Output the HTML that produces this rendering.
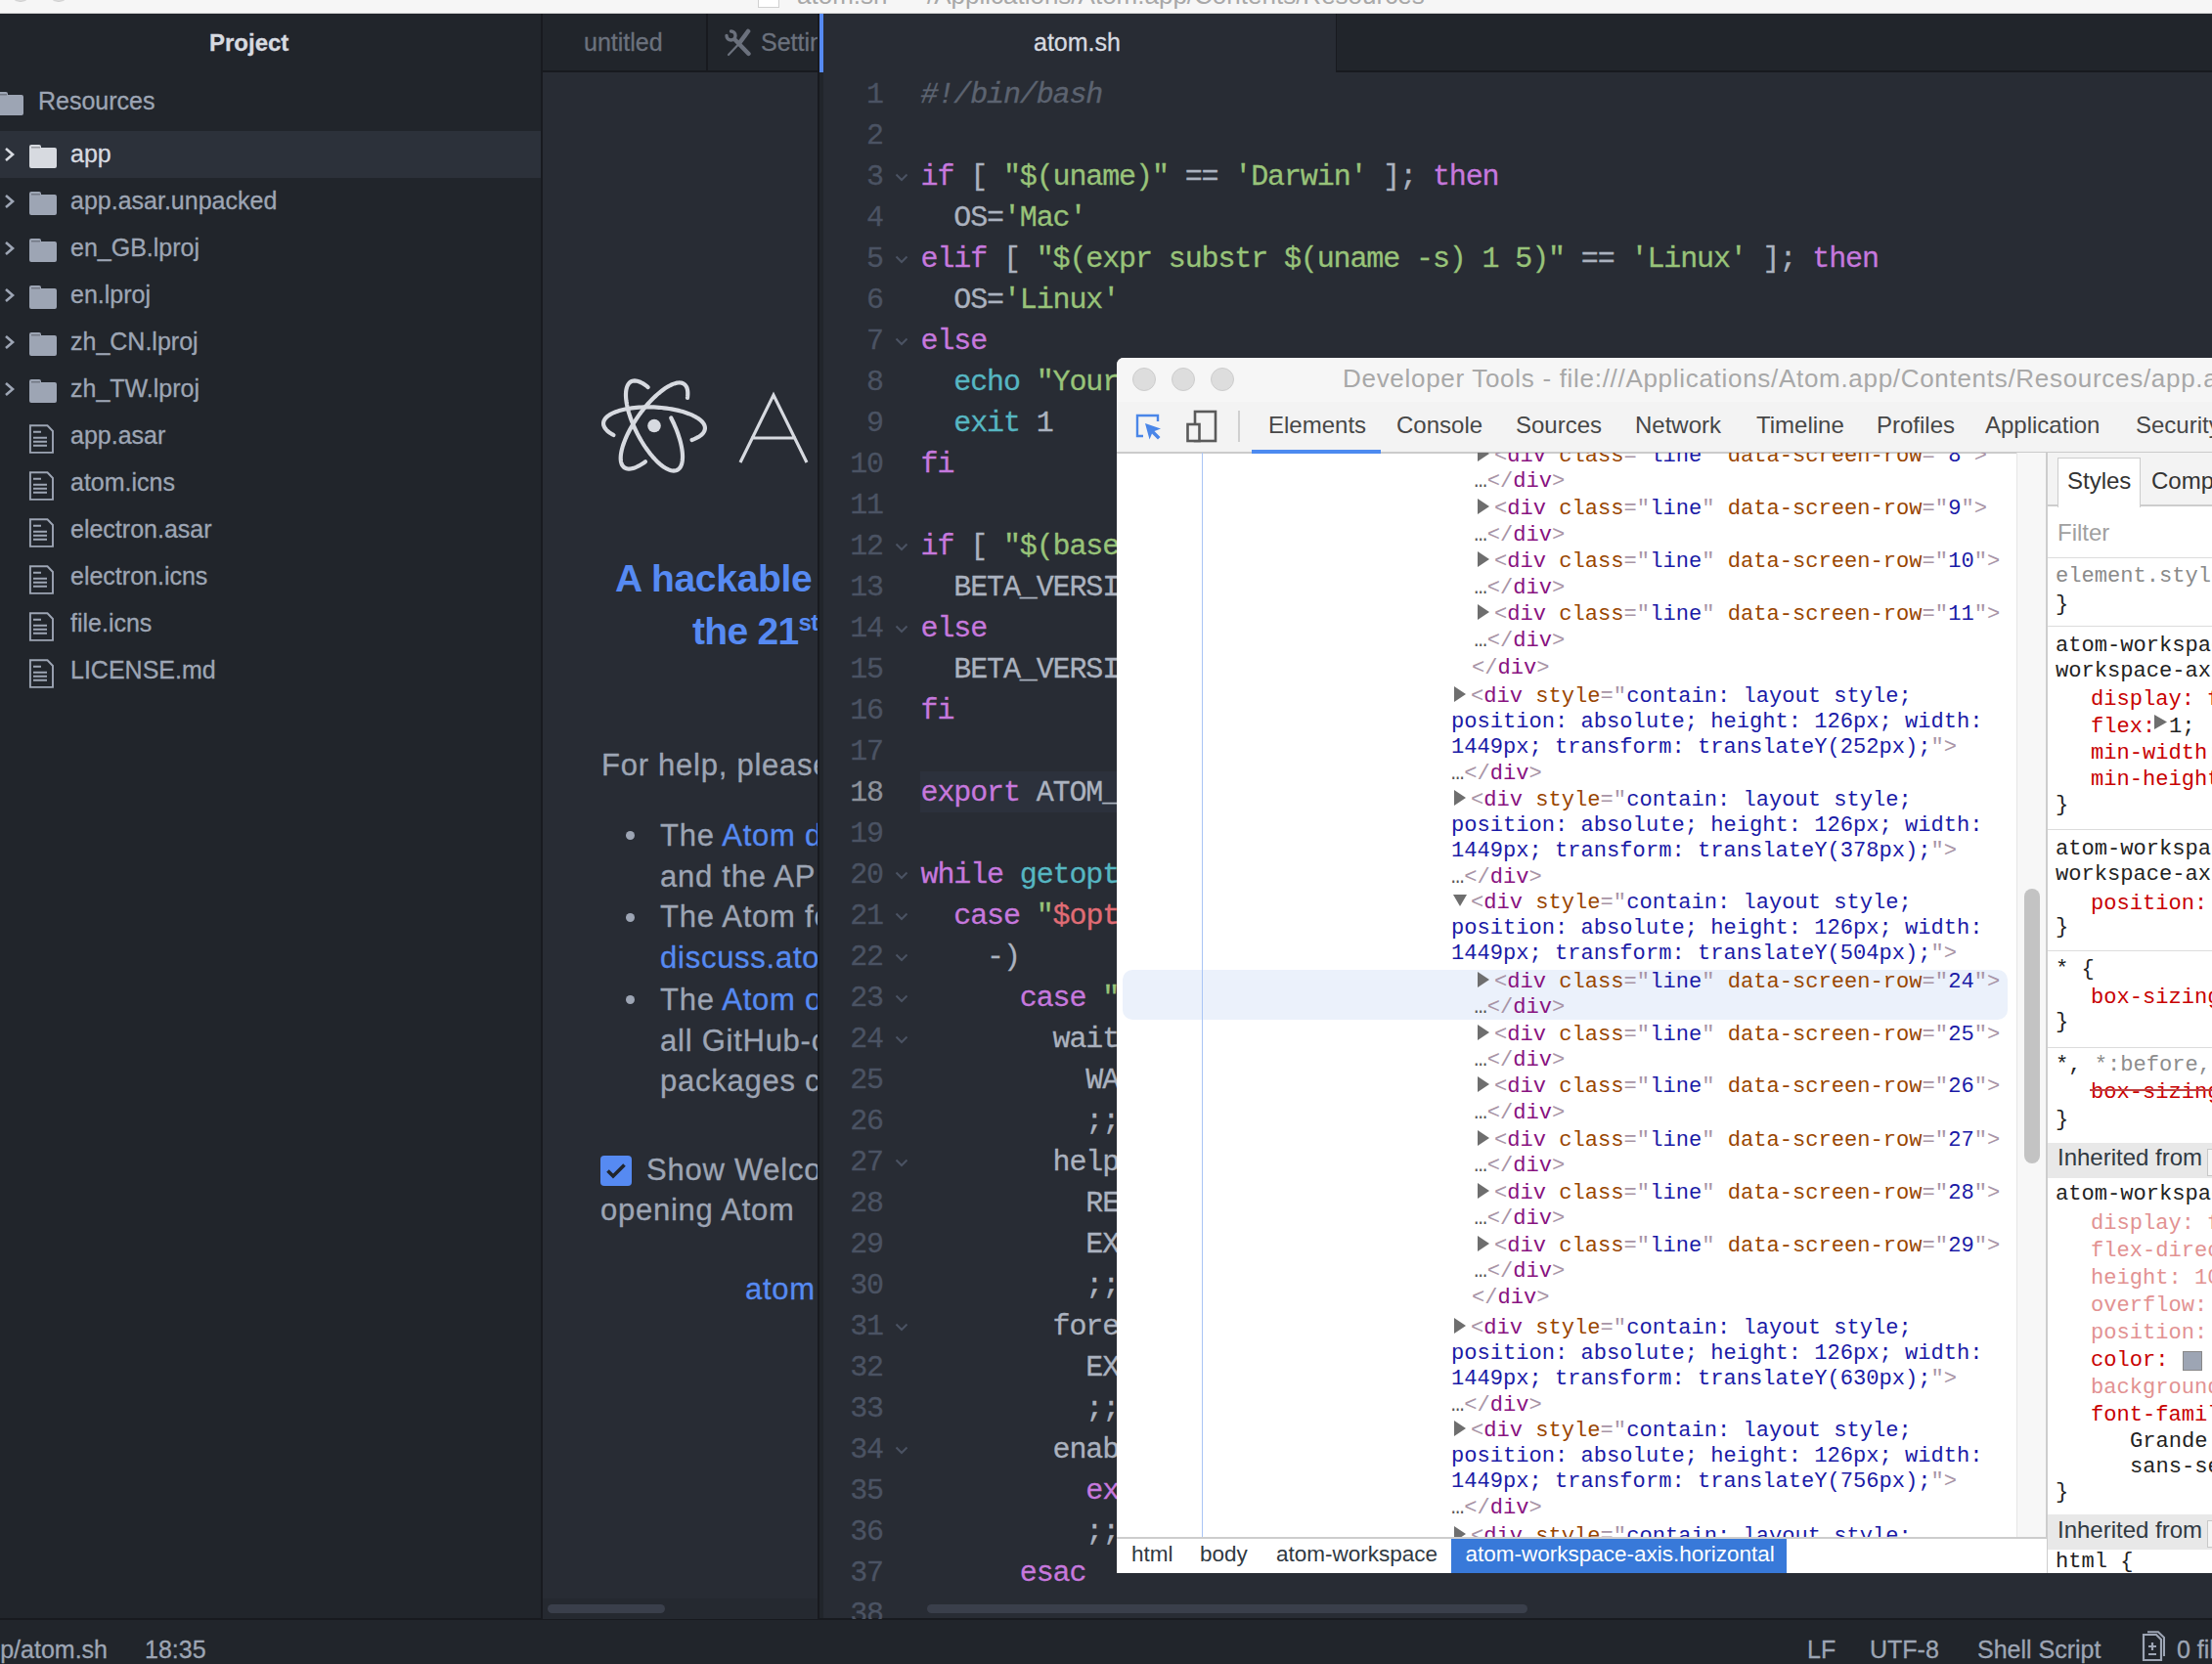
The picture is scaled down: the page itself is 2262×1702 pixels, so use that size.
<!DOCTYPE html>
<html><head><meta charset="utf-8"><style>
html,body{margin:0;padding:0;}
body{width:2262px;height:1702px;overflow:hidden;position:relative;background:#21252b;font-family:"Liberation Sans", sans-serif;}
.t{position:absolute;white-space:pre;}
.d{-webkit-text-stroke:0.3px currentColor;}
.b{position:absolute;}
</style></head><body>
<div class="b" style="left:0px;top:0px;width:2262px;height:14px;background:#f6f6f6;"></div>
<div class="b" style="left:0px;top:13px;width:2262px;height:1px;background:#d6d6d6;"></div>
<div class="b" style="left:9px;top:-22px;width:22px;height:22px;border-radius:50%;background:#dcdcdc;border:1px solid #cfcfcf"></div>
<div class="b" style="left:48px;top:-22px;width:22px;height:22px;border-radius:50%;background:#dcdcdc;border:1px solid #cfcfcf"></div>
<div class="b" style="left:775px;top:-14px;width:20px;height:20px;background:#ffffff;border:1px solid #d0d0d0;"></div>
<div class="t" style="left:815.00px;top:-20.01px;font-size:26px;line-height:31px;color:#a8a8a8;">atom.sh — /Applications/Atom.app/Contents/Resources</div>
<div class="b" style="left:0px;top:14px;width:2262px;height:60px;background:#21252b;"></div>
<div class="t d" style="left:214.00px;top:28.68px;font-size:24px;line-height:29px;color:#d7dae0;font-weight:bold;">Project</div>
<div class="b" style="left:0px;top:74px;width:553px;height:1582px;background:#21252b;"></div>
<div class="b" style="left:553px;top:14px;width:2px;height:1642px;background:#181a1f;"></div>
<div class="b" style="left:555px;top:14px;width:283px;height:60px;background:#21252b;"></div>
<div class="b" style="left:555px;top:72px;width:283px;height:2px;background:#181a1f;"></div>
<div class="b" style="left:722px;top:14px;width:2px;height:58px;background:#181a1f;"></div>
<div class="t d" style="left:597.00px;top:27.83px;font-size:25px;line-height:30px;color:#6b717d;">untitled</div>
<div class="t d" style="left:778.00px;top:27.83px;font-size:25px;line-height:30px;color:#6b717d;">Settings</div>
<svg class="b" style="left:740px;top:28px" width="32" height="32" viewBox="0 0 32 32">
<g fill="none" stroke="#6b717d" stroke-linecap="round">
<path d="M3 8.5 A4.5 4.5 0 1 0 7.5 4" stroke-width="3.4"/>
<path d="M12 13 L25.5 27" stroke-width="4.4"/>
<path d="M25 4 L16.5 15.5" stroke-width="4.6"/>
<path d="M15 17.5 L5 28" stroke-width="2.2"/>
</g></svg>
<div class="b" style="left:555px;top:74px;width:281px;height:1582px;background:#282c34;"></div>
<div class="b" style="left:836px;top:14px;width:2px;height:1642px;background:#181a1f;"></div>
<div class="b" style="left:838px;top:14px;width:4px;height:60px;background:#568af2;"></div>
<div class="b" style="left:842px;top:14px;width:525px;height:60px;background:#282c34;"></div>
<div class="b" style="left:1366px;top:14px;width:896px;height:60px;background:#21252b;"></div>
<div class="b" style="left:1366px;top:72px;width:896px;height:2px;background:#181a1f;"></div>
<div class="b" style="left:1366px;top:14px;width:1px;height:60px;background:#181a1f;"></div>
<div class="t d" style="left:1057.00px;top:27.83px;font-size:25px;line-height:30px;color:#d7dae0;">atom.sh</div>
<div class="b" style="left:842px;top:74px;width:1420px;height:1582px;background:#282c34;"></div>
<div class="b" style="left:0px;top:1656px;width:2262px;height:46px;background:#21252b;"></div>
<div class="b" style="left:0px;top:1655px;width:2262px;height:2px;background:#181a1f;"></div>
<div class="t d" style="left:-27.60px;top:1672.13px;font-size:25px;line-height:30px;color:#9da5b4;">app/atom.sh</div>
<div class="t d" style="left:148.00px;top:1672.13px;font-size:25px;line-height:30px;color:#9da5b4;">18:35</div>
<div class="t d" style="left:1848.00px;top:1672.13px;font-size:25px;line-height:30px;color:#9da5b4;">LF</div>
<div class="t d" style="left:1912.00px;top:1672.13px;font-size:25px;line-height:30px;color:#9da5b4;">UTF-8</div>
<div class="t d" style="left:2022.00px;top:1672.13px;font-size:25px;line-height:30px;color:#9da5b4;">Shell Script</div>
<div class="t d" style="left:2226.00px;top:1672.13px;font-size:25px;line-height:30px;color:#9da5b4;">0 files</div>
<svg class="b" style="left:2186px;top:1668px" width="30" height="32" viewBox="0 0 30 32"><path d="M6 4 H19 L24 9 V30 H6 Z" fill="none" stroke="#9da5b4" stroke-width="2.2"/><path d="M10 1.2 H21 L27 7 V26" fill="none" stroke="#9da5b4" stroke-width="2"/><path d="M15 12 V20 M11 16 H19 M11 24 H19" stroke="#9da5b4" stroke-width="2.2"/></svg>
<svg class="b" style="left:-4px;top:94px" width="28" height="24" viewBox="0 0 28 24"><path d="M0 2 Q0 0 2 0 L10 0 Q12 0 12 2 L12 3 L26 3 Q28 3 28 5 L28 22 Q28 24 26 24 L2 24 Q0 24 0 22 Z" fill="#9da5b4"/><rect x="2" y="2" width="9" height="1.5" fill="#21252b" opacity="0.35"/></svg>
<div class="t d" style="left:39.00px;top:88.33px;font-size:25px;line-height:30px;color:#9da5b4;">Resources</div>
<div class="b" style="left:0px;top:134px;width:553px;height:48px;background:#2c313a;"></div>
<svg class="b" style="left:4px;top:150px" width="12" height="16" viewBox="0 0 12 16"><path d="M2 2 L9 8 L2 14" fill="none" stroke="#d7dae0" stroke-width="2.6"/></svg>
<svg class="b" style="left:30px;top:148px" width="28" height="24" viewBox="0 0 28 24"><path d="M0 2 Q0 0 2 0 L10 0 Q12 0 12 2 L12 3 L26 3 Q28 3 28 5 L28 22 Q28 24 26 24 L2 24 Q0 24 0 22 Z" fill="#d7dae0"/><rect x="2" y="2" width="9" height="1.5" fill="#21252b" opacity="0.35"/></svg>
<div class="t d" style="left:72.00px;top:142.33px;font-size:25px;line-height:30px;color:#d7dae0;">app</div>
<svg class="b" style="left:4px;top:198px" width="12" height="16" viewBox="0 0 12 16"><path d="M2 2 L9 8 L2 14" fill="none" stroke="#9da5b4" stroke-width="2.6"/></svg>
<svg class="b" style="left:30px;top:196px" width="28" height="24" viewBox="0 0 28 24"><path d="M0 2 Q0 0 2 0 L10 0 Q12 0 12 2 L12 3 L26 3 Q28 3 28 5 L28 22 Q28 24 26 24 L2 24 Q0 24 0 22 Z" fill="#9da5b4"/><rect x="2" y="2" width="9" height="1.5" fill="#21252b" opacity="0.35"/></svg>
<div class="t d" style="left:72.00px;top:190.33px;font-size:25px;line-height:30px;color:#9da5b4;">app.asar.unpacked</div>
<svg class="b" style="left:4px;top:246px" width="12" height="16" viewBox="0 0 12 16"><path d="M2 2 L9 8 L2 14" fill="none" stroke="#9da5b4" stroke-width="2.6"/></svg>
<svg class="b" style="left:30px;top:244px" width="28" height="24" viewBox="0 0 28 24"><path d="M0 2 Q0 0 2 0 L10 0 Q12 0 12 2 L12 3 L26 3 Q28 3 28 5 L28 22 Q28 24 26 24 L2 24 Q0 24 0 22 Z" fill="#9da5b4"/><rect x="2" y="2" width="9" height="1.5" fill="#21252b" opacity="0.35"/></svg>
<div class="t d" style="left:72.00px;top:238.33px;font-size:25px;line-height:30px;color:#9da5b4;">en_GB.lproj</div>
<svg class="b" style="left:4px;top:294px" width="12" height="16" viewBox="0 0 12 16"><path d="M2 2 L9 8 L2 14" fill="none" stroke="#9da5b4" stroke-width="2.6"/></svg>
<svg class="b" style="left:30px;top:292px" width="28" height="24" viewBox="0 0 28 24"><path d="M0 2 Q0 0 2 0 L10 0 Q12 0 12 2 L12 3 L26 3 Q28 3 28 5 L28 22 Q28 24 26 24 L2 24 Q0 24 0 22 Z" fill="#9da5b4"/><rect x="2" y="2" width="9" height="1.5" fill="#21252b" opacity="0.35"/></svg>
<div class="t d" style="left:72.00px;top:286.33px;font-size:25px;line-height:30px;color:#9da5b4;">en.lproj</div>
<svg class="b" style="left:4px;top:342px" width="12" height="16" viewBox="0 0 12 16"><path d="M2 2 L9 8 L2 14" fill="none" stroke="#9da5b4" stroke-width="2.6"/></svg>
<svg class="b" style="left:30px;top:340px" width="28" height="24" viewBox="0 0 28 24"><path d="M0 2 Q0 0 2 0 L10 0 Q12 0 12 2 L12 3 L26 3 Q28 3 28 5 L28 22 Q28 24 26 24 L2 24 Q0 24 0 22 Z" fill="#9da5b4"/><rect x="2" y="2" width="9" height="1.5" fill="#21252b" opacity="0.35"/></svg>
<div class="t d" style="left:72.00px;top:334.33px;font-size:25px;line-height:30px;color:#9da5b4;">zh_CN.lproj</div>
<svg class="b" style="left:4px;top:390px" width="12" height="16" viewBox="0 0 12 16"><path d="M2 2 L9 8 L2 14" fill="none" stroke="#9da5b4" stroke-width="2.6"/></svg>
<svg class="b" style="left:30px;top:388px" width="28" height="24" viewBox="0 0 28 24"><path d="M0 2 Q0 0 2 0 L10 0 Q12 0 12 2 L12 3 L26 3 Q28 3 28 5 L28 22 Q28 24 26 24 L2 24 Q0 24 0 22 Z" fill="#9da5b4"/><rect x="2" y="2" width="9" height="1.5" fill="#21252b" opacity="0.35"/></svg>
<div class="t d" style="left:72.00px;top:382.33px;font-size:25px;line-height:30px;color:#9da5b4;">zh_TW.lproj</div>
<svg class="b" style="left:29px;top:433.5px" width="26" height="30" viewBox="0 0 26 30"><path d="M1.9 1.3 L19.5 1.3 L25 7 L25 28.9 L1.9 28.9 Z" fill="none" stroke="#9da5b4" stroke-width="1.9"/><path d="M5 7.8 H13 M5 13.8 H19 M5 17.8 H19 M5 21.8 H19" stroke="#9da5b4" stroke-width="1.9"/></svg>
<div class="t d" style="left:72.00px;top:430.33px;font-size:25px;line-height:30px;color:#9da5b4;">app.asar</div>
<svg class="b" style="left:29px;top:481.5px" width="26" height="30" viewBox="0 0 26 30"><path d="M1.9 1.3 L19.5 1.3 L25 7 L25 28.9 L1.9 28.9 Z" fill="none" stroke="#9da5b4" stroke-width="1.9"/><path d="M5 7.8 H13 M5 13.8 H19 M5 17.8 H19 M5 21.8 H19" stroke="#9da5b4" stroke-width="1.9"/></svg>
<div class="t d" style="left:72.00px;top:478.33px;font-size:25px;line-height:30px;color:#9da5b4;">atom.icns</div>
<svg class="b" style="left:29px;top:529.5px" width="26" height="30" viewBox="0 0 26 30"><path d="M1.9 1.3 L19.5 1.3 L25 7 L25 28.9 L1.9 28.9 Z" fill="none" stroke="#9da5b4" stroke-width="1.9"/><path d="M5 7.8 H13 M5 13.8 H19 M5 17.8 H19 M5 21.8 H19" stroke="#9da5b4" stroke-width="1.9"/></svg>
<div class="t d" style="left:72.00px;top:526.33px;font-size:25px;line-height:30px;color:#9da5b4;">electron.asar</div>
<svg class="b" style="left:29px;top:577.5px" width="26" height="30" viewBox="0 0 26 30"><path d="M1.9 1.3 L19.5 1.3 L25 7 L25 28.9 L1.9 28.9 Z" fill="none" stroke="#9da5b4" stroke-width="1.9"/><path d="M5 7.8 H13 M5 13.8 H19 M5 17.8 H19 M5 21.8 H19" stroke="#9da5b4" stroke-width="1.9"/></svg>
<div class="t d" style="left:72.00px;top:574.33px;font-size:25px;line-height:30px;color:#9da5b4;">electron.icns</div>
<svg class="b" style="left:29px;top:625.5px" width="26" height="30" viewBox="0 0 26 30"><path d="M1.9 1.3 L19.5 1.3 L25 7 L25 28.9 L1.9 28.9 Z" fill="none" stroke="#9da5b4" stroke-width="1.9"/><path d="M5 7.8 H13 M5 13.8 H19 M5 17.8 H19 M5 21.8 H19" stroke="#9da5b4" stroke-width="1.9"/></svg>
<div class="t d" style="left:72.00px;top:622.33px;font-size:25px;line-height:30px;color:#9da5b4;">file.icns</div>
<svg class="b" style="left:29px;top:673.5px" width="26" height="30" viewBox="0 0 26 30"><path d="M1.9 1.3 L19.5 1.3 L25 7 L25 28.9 L1.9 28.9 Z" fill="none" stroke="#9da5b4" stroke-width="1.9"/><path d="M5 7.8 H13 M5 13.8 H19 M5 17.8 H19 M5 21.8 H19" stroke="#9da5b4" stroke-width="1.9"/></svg>
<div class="t d" style="left:72.00px;top:670.33px;font-size:25px;line-height:30px;color:#9da5b4;">LICENSE.md</div>
<div class="b" style="left:941px;top:788.5px;width:1321px;height:42px;background:#2c313c;"></div>
<div class="b" style="left:842px;top:74px;width:1420px;height:1582px;overflow:hidden">
<div class="t d" style="left:0.00px;top:2.22px;font-size:30px;line-height:42px;color:#4b5363;font-family:'Liberation Mono', monospace;width:60.5px;text-align:right;letter-spacing:-1.4px;">1</div>
<div class="t d" style="left:99.50px;top:2.22px;font-size:30px;line-height:42px;color:#abb2bf;font-family:'Liberation Mono', monospace;letter-spacing:-1.12px;"><span style="color:#5c6370;font-style:italic">#!/bin/bash</span></div>
<div class="t d" style="left:0.00px;top:44.22px;font-size:30px;line-height:42px;color:#4b5363;font-family:'Liberation Mono', monospace;width:60.5px;text-align:right;letter-spacing:-1.4px;">2</div>
<div class="t d" style="left:99.50px;top:44.22px;font-size:30px;line-height:42px;color:#abb2bf;font-family:'Liberation Mono', monospace;letter-spacing:-1.12px;"></div>
<div class="t d" style="left:0.00px;top:86.22px;font-size:30px;line-height:42px;color:#4b5363;font-family:'Liberation Mono', monospace;width:60.5px;text-align:right;letter-spacing:-1.4px;">3</div>
<svg class="b" style="left:73px;top:102.69999999999999px" width="14" height="9" viewBox="0 0 14 9"><path d="M1.5 1.5 L7 7 L12.5 1.5" fill="none" stroke="#4b5363" stroke-width="2"/></svg>
<div class="t d" style="left:99.50px;top:86.22px;font-size:30px;line-height:42px;color:#abb2bf;font-family:'Liberation Mono', monospace;letter-spacing:-1.12px;"><span style="color:#c678dd">if</span> [ <span style="color:#98c379">&quot;$(uname)&quot;</span> == <span style="color:#98c379">&#x27;Darwin&#x27;</span> ]; <span style="color:#c678dd">then</span></div>
<div class="t d" style="left:0.00px;top:128.22px;font-size:30px;line-height:42px;color:#4b5363;font-family:'Liberation Mono', monospace;width:60.5px;text-align:right;letter-spacing:-1.4px;">4</div>
<div class="t d" style="left:99.50px;top:128.22px;font-size:30px;line-height:42px;color:#abb2bf;font-family:'Liberation Mono', monospace;letter-spacing:-1.12px;">  OS=<span style="color:#98c379">&#x27;Mac&#x27;</span></div>
<div class="t d" style="left:0.00px;top:170.22px;font-size:30px;line-height:42px;color:#4b5363;font-family:'Liberation Mono', monospace;width:60.5px;text-align:right;letter-spacing:-1.4px;">5</div>
<svg class="b" style="left:73px;top:186.7px" width="14" height="9" viewBox="0 0 14 9"><path d="M1.5 1.5 L7 7 L12.5 1.5" fill="none" stroke="#4b5363" stroke-width="2"/></svg>
<div class="t d" style="left:99.50px;top:170.22px;font-size:30px;line-height:42px;color:#abb2bf;font-family:'Liberation Mono', monospace;letter-spacing:-1.12px;"><span style="color:#c678dd">elif</span> [ <span style="color:#98c379">&quot;$(expr substr $(uname -s) 1 5)&quot;</span> == <span style="color:#98c379">&#x27;Linux&#x27;</span> ]; <span style="color:#c678dd">then</span></div>
<div class="t d" style="left:0.00px;top:212.22px;font-size:30px;line-height:42px;color:#4b5363;font-family:'Liberation Mono', monospace;width:60.5px;text-align:right;letter-spacing:-1.4px;">6</div>
<div class="t d" style="left:99.50px;top:212.22px;font-size:30px;line-height:42px;color:#abb2bf;font-family:'Liberation Mono', monospace;letter-spacing:-1.12px;">  OS=<span style="color:#98c379">&#x27;Linux&#x27;</span></div>
<div class="t d" style="left:0.00px;top:254.22px;font-size:30px;line-height:42px;color:#4b5363;font-family:'Liberation Mono', monospace;width:60.5px;text-align:right;letter-spacing:-1.4px;">7</div>
<svg class="b" style="left:73px;top:270.7px" width="14" height="9" viewBox="0 0 14 9"><path d="M1.5 1.5 L7 7 L12.5 1.5" fill="none" stroke="#4b5363" stroke-width="2"/></svg>
<div class="t d" style="left:99.50px;top:254.22px;font-size:30px;line-height:42px;color:#abb2bf;font-family:'Liberation Mono', monospace;letter-spacing:-1.12px;"><span style="color:#c678dd">else</span></div>
<div class="t d" style="left:0.00px;top:296.22px;font-size:30px;line-height:42px;color:#4b5363;font-family:'Liberation Mono', monospace;width:60.5px;text-align:right;letter-spacing:-1.4px;">8</div>
<div class="t d" style="left:99.50px;top:296.22px;font-size:30px;line-height:42px;color:#abb2bf;font-family:'Liberation Mono', monospace;letter-spacing:-1.12px;">  <span style="color:#56b6c2">echo</span> <span style="color:#98c379">&quot;Your platform ($(uname -a)) is not supported.&quot;</span></div>
<div class="t d" style="left:0.00px;top:338.22px;font-size:30px;line-height:42px;color:#4b5363;font-family:'Liberation Mono', monospace;width:60.5px;text-align:right;letter-spacing:-1.4px;">9</div>
<div class="t d" style="left:99.50px;top:338.22px;font-size:30px;line-height:42px;color:#abb2bf;font-family:'Liberation Mono', monospace;letter-spacing:-1.12px;">  <span style="color:#56b6c2">exit</span> 1</div>
<div class="t d" style="left:0.00px;top:380.22px;font-size:30px;line-height:42px;color:#4b5363;font-family:'Liberation Mono', monospace;width:60.5px;text-align:right;letter-spacing:-1.4px;">10</div>
<div class="t d" style="left:99.50px;top:380.22px;font-size:30px;line-height:42px;color:#abb2bf;font-family:'Liberation Mono', monospace;letter-spacing:-1.12px;"><span style="color:#c678dd">fi</span></div>
<div class="t d" style="left:0.00px;top:422.22px;font-size:30px;line-height:42px;color:#4b5363;font-family:'Liberation Mono', monospace;width:60.5px;text-align:right;letter-spacing:-1.4px;">11</div>
<div class="t d" style="left:99.50px;top:422.22px;font-size:30px;line-height:42px;color:#abb2bf;font-family:'Liberation Mono', monospace;letter-spacing:-1.12px;"></div>
<div class="t d" style="left:0.00px;top:464.22px;font-size:30px;line-height:42px;color:#4b5363;font-family:'Liberation Mono', monospace;width:60.5px;text-align:right;letter-spacing:-1.4px;">12</div>
<svg class="b" style="left:73px;top:480.70000000000005px" width="14" height="9" viewBox="0 0 14 9"><path d="M1.5 1.5 L7 7 L12.5 1.5" fill="none" stroke="#4b5363" stroke-width="2"/></svg>
<div class="t d" style="left:99.50px;top:464.22px;font-size:30px;line-height:42px;color:#abb2bf;font-family:'Liberation Mono', monospace;letter-spacing:-1.12px;"><span style="color:#c678dd">if</span> [ <span style="color:#98c379">&quot;$(basename $0)&quot;</span> == <span style="color:#98c379">&#x27;atom-beta&#x27;</span> ]; <span style="color:#c678dd">then</span></div>
<div class="t d" style="left:0.00px;top:506.22px;font-size:30px;line-height:42px;color:#4b5363;font-family:'Liberation Mono', monospace;width:60.5px;text-align:right;letter-spacing:-1.4px;">13</div>
<div class="t d" style="left:99.50px;top:506.22px;font-size:30px;line-height:42px;color:#abb2bf;font-family:'Liberation Mono', monospace;letter-spacing:-1.12px;">  BETA_VERSION=true</div>
<div class="t d" style="left:0.00px;top:548.22px;font-size:30px;line-height:42px;color:#4b5363;font-family:'Liberation Mono', monospace;width:60.5px;text-align:right;letter-spacing:-1.4px;">14</div>
<svg class="b" style="left:73px;top:564.7px" width="14" height="9" viewBox="0 0 14 9"><path d="M1.5 1.5 L7 7 L12.5 1.5" fill="none" stroke="#4b5363" stroke-width="2"/></svg>
<div class="t d" style="left:99.50px;top:548.22px;font-size:30px;line-height:42px;color:#abb2bf;font-family:'Liberation Mono', monospace;letter-spacing:-1.12px;"><span style="color:#c678dd">else</span></div>
<div class="t d" style="left:0.00px;top:590.22px;font-size:30px;line-height:42px;color:#4b5363;font-family:'Liberation Mono', monospace;width:60.5px;text-align:right;letter-spacing:-1.4px;">15</div>
<div class="t d" style="left:99.50px;top:590.22px;font-size:30px;line-height:42px;color:#abb2bf;font-family:'Liberation Mono', monospace;letter-spacing:-1.12px;">  BETA_VERSION=</div>
<div class="t d" style="left:0.00px;top:632.22px;font-size:30px;line-height:42px;color:#4b5363;font-family:'Liberation Mono', monospace;width:60.5px;text-align:right;letter-spacing:-1.4px;">16</div>
<div class="t d" style="left:99.50px;top:632.22px;font-size:30px;line-height:42px;color:#abb2bf;font-family:'Liberation Mono', monospace;letter-spacing:-1.12px;"><span style="color:#c678dd">fi</span></div>
<div class="t d" style="left:0.00px;top:674.22px;font-size:30px;line-height:42px;color:#4b5363;font-family:'Liberation Mono', monospace;width:60.5px;text-align:right;letter-spacing:-1.4px;">17</div>
<div class="t d" style="left:99.50px;top:674.22px;font-size:30px;line-height:42px;color:#abb2bf;font-family:'Liberation Mono', monospace;letter-spacing:-1.12px;"></div>
<div class="t d" style="left:0.00px;top:716.22px;font-size:30px;line-height:42px;color:#8d929b;font-family:'Liberation Mono', monospace;width:60.5px;text-align:right;letter-spacing:-1.4px;">18</div>
<div class="t d" style="left:99.50px;top:716.22px;font-size:30px;line-height:42px;color:#abb2bf;font-family:'Liberation Mono', monospace;letter-spacing:-1.12px;"><span style="color:#c678dd">export</span> ATOM_DISABLE_SHELLING_OUT_FOR_ENVIRONMENT=true</div>
<div class="t d" style="left:0.00px;top:758.22px;font-size:30px;line-height:42px;color:#4b5363;font-family:'Liberation Mono', monospace;width:60.5px;text-align:right;letter-spacing:-1.4px;">19</div>
<div class="t d" style="left:99.50px;top:758.22px;font-size:30px;line-height:42px;color:#abb2bf;font-family:'Liberation Mono', monospace;letter-spacing:-1.12px;"></div>
<div class="t d" style="left:0.00px;top:800.22px;font-size:30px;line-height:42px;color:#4b5363;font-family:'Liberation Mono', monospace;width:60.5px;text-align:right;letter-spacing:-1.4px;">20</div>
<svg class="b" style="left:73px;top:816.7px" width="14" height="9" viewBox="0 0 14 9"><path d="M1.5 1.5 L7 7 L12.5 1.5" fill="none" stroke="#4b5363" stroke-width="2"/></svg>
<div class="t d" style="left:99.50px;top:800.22px;font-size:30px;line-height:42px;color:#abb2bf;font-family:'Liberation Mono', monospace;letter-spacing:-1.12px;"><span style="color:#c678dd">while</span> <span style="color:#56b6c2">getopts</span> <span style="color:#98c379">&quot;:wtfvh-:&quot;</span> opt; <span style="color:#c678dd">do</span></div>
<div class="t d" style="left:0.00px;top:842.22px;font-size:30px;line-height:42px;color:#4b5363;font-family:'Liberation Mono', monospace;width:60.5px;text-align:right;letter-spacing:-1.4px;">21</div>
<svg class="b" style="left:73px;top:858.7px" width="14" height="9" viewBox="0 0 14 9"><path d="M1.5 1.5 L7 7 L12.5 1.5" fill="none" stroke="#4b5363" stroke-width="2"/></svg>
<div class="t d" style="left:99.50px;top:842.22px;font-size:30px;line-height:42px;color:#abb2bf;font-family:'Liberation Mono', monospace;letter-spacing:-1.12px;">  <span style="color:#c678dd">case</span> <span style="color:#98c379">&quot;</span><span style="color:#e06c75">$opt</span><span style="color:#98c379">&quot;</span> <span style="color:#c678dd">in</span></div>
<div class="t d" style="left:0.00px;top:884.22px;font-size:30px;line-height:42px;color:#4b5363;font-family:'Liberation Mono', monospace;width:60.5px;text-align:right;letter-spacing:-1.4px;">22</div>
<svg class="b" style="left:73px;top:900.7px" width="14" height="9" viewBox="0 0 14 9"><path d="M1.5 1.5 L7 7 L12.5 1.5" fill="none" stroke="#4b5363" stroke-width="2"/></svg>
<div class="t d" style="left:99.50px;top:884.22px;font-size:30px;line-height:42px;color:#abb2bf;font-family:'Liberation Mono', monospace;letter-spacing:-1.12px;">    -)</div>
<div class="t d" style="left:0.00px;top:926.22px;font-size:30px;line-height:42px;color:#4b5363;font-family:'Liberation Mono', monospace;width:60.5px;text-align:right;letter-spacing:-1.4px;">23</div>
<svg class="b" style="left:73px;top:942.7px" width="14" height="9" viewBox="0 0 14 9"><path d="M1.5 1.5 L7 7 L12.5 1.5" fill="none" stroke="#4b5363" stroke-width="2"/></svg>
<div class="t d" style="left:99.50px;top:926.22px;font-size:30px;line-height:42px;color:#abb2bf;font-family:'Liberation Mono', monospace;letter-spacing:-1.12px;">      <span style="color:#c678dd">case</span> <span style="color:#98c379">&quot;</span><span style="color:#e06c75">${OPTARG}</span><span style="color:#98c379">&quot;</span> <span style="color:#c678dd">in</span></div>
<div class="t d" style="left:0.00px;top:968.22px;font-size:30px;line-height:42px;color:#4b5363;font-family:'Liberation Mono', monospace;width:60.5px;text-align:right;letter-spacing:-1.4px;">24</div>
<svg class="b" style="left:73px;top:984.7px" width="14" height="9" viewBox="0 0 14 9"><path d="M1.5 1.5 L7 7 L12.5 1.5" fill="none" stroke="#4b5363" stroke-width="2"/></svg>
<div class="t d" style="left:99.50px;top:968.22px;font-size:30px;line-height:42px;color:#abb2bf;font-family:'Liberation Mono', monospace;letter-spacing:-1.12px;">        wait)</div>
<div class="t d" style="left:0.00px;top:1010.22px;font-size:30px;line-height:42px;color:#4b5363;font-family:'Liberation Mono', monospace;width:60.5px;text-align:right;letter-spacing:-1.4px;">25</div>
<div class="t d" style="left:99.50px;top:1010.22px;font-size:30px;line-height:42px;color:#abb2bf;font-family:'Liberation Mono', monospace;letter-spacing:-1.12px;">          WAIT=1</div>
<div class="t d" style="left:0.00px;top:1052.22px;font-size:30px;line-height:42px;color:#4b5363;font-family:'Liberation Mono', monospace;width:60.5px;text-align:right;letter-spacing:-1.4px;">26</div>
<div class="t d" style="left:99.50px;top:1052.22px;font-size:30px;line-height:42px;color:#abb2bf;font-family:'Liberation Mono', monospace;letter-spacing:-1.12px;">          ;;</div>
<div class="t d" style="left:0.00px;top:1094.22px;font-size:30px;line-height:42px;color:#4b5363;font-family:'Liberation Mono', monospace;width:60.5px;text-align:right;letter-spacing:-1.4px;">27</div>
<svg class="b" style="left:73px;top:1110.7px" width="14" height="9" viewBox="0 0 14 9"><path d="M1.5 1.5 L7 7 L12.5 1.5" fill="none" stroke="#4b5363" stroke-width="2"/></svg>
<div class="t d" style="left:99.50px;top:1094.22px;font-size:30px;line-height:42px;color:#abb2bf;font-family:'Liberation Mono', monospace;letter-spacing:-1.12px;">        help|version)</div>
<div class="t d" style="left:0.00px;top:1136.22px;font-size:30px;line-height:42px;color:#4b5363;font-family:'Liberation Mono', monospace;width:60.5px;text-align:right;letter-spacing:-1.4px;">28</div>
<div class="t d" style="left:99.50px;top:1136.22px;font-size:30px;line-height:42px;color:#abb2bf;font-family:'Liberation Mono', monospace;letter-spacing:-1.12px;">          REDIRECT_STDERR=1</div>
<div class="t d" style="left:0.00px;top:1178.22px;font-size:30px;line-height:42px;color:#4b5363;font-family:'Liberation Mono', monospace;width:60.5px;text-align:right;letter-spacing:-1.4px;">29</div>
<div class="t d" style="left:99.50px;top:1178.22px;font-size:30px;line-height:42px;color:#abb2bf;font-family:'Liberation Mono', monospace;letter-spacing:-1.12px;">          EXPECT_OUTPUT=1</div>
<div class="t d" style="left:0.00px;top:1220.22px;font-size:30px;line-height:42px;color:#4b5363;font-family:'Liberation Mono', monospace;width:60.5px;text-align:right;letter-spacing:-1.4px;">30</div>
<div class="t d" style="left:99.50px;top:1220.22px;font-size:30px;line-height:42px;color:#abb2bf;font-family:'Liberation Mono', monospace;letter-spacing:-1.12px;">          ;;</div>
<div class="t d" style="left:0.00px;top:1262.22px;font-size:30px;line-height:42px;color:#4b5363;font-family:'Liberation Mono', monospace;width:60.5px;text-align:right;letter-spacing:-1.4px;">31</div>
<svg class="b" style="left:73px;top:1278.7px" width="14" height="9" viewBox="0 0 14 9"><path d="M1.5 1.5 L7 7 L12.5 1.5" fill="none" stroke="#4b5363" stroke-width="2"/></svg>
<div class="t d" style="left:99.50px;top:1262.22px;font-size:30px;line-height:42px;color:#abb2bf;font-family:'Liberation Mono', monospace;letter-spacing:-1.12px;">        foreground|benchmark|benchmark-test|test)</div>
<div class="t d" style="left:0.00px;top:1304.22px;font-size:30px;line-height:42px;color:#4b5363;font-family:'Liberation Mono', monospace;width:60.5px;text-align:right;letter-spacing:-1.4px;">32</div>
<div class="t d" style="left:99.50px;top:1304.22px;font-size:30px;line-height:42px;color:#abb2bf;font-family:'Liberation Mono', monospace;letter-spacing:-1.12px;">          EXPECT_OUTPUT=1</div>
<div class="t d" style="left:0.00px;top:1346.22px;font-size:30px;line-height:42px;color:#4b5363;font-family:'Liberation Mono', monospace;width:60.5px;text-align:right;letter-spacing:-1.4px;">33</div>
<div class="t d" style="left:99.50px;top:1346.22px;font-size:30px;line-height:42px;color:#abb2bf;font-family:'Liberation Mono', monospace;letter-spacing:-1.12px;">          ;;</div>
<div class="t d" style="left:0.00px;top:1388.22px;font-size:30px;line-height:42px;color:#4b5363;font-family:'Liberation Mono', monospace;width:60.5px;text-align:right;letter-spacing:-1.4px;">34</div>
<svg class="b" style="left:73px;top:1404.7px" width="14" height="9" viewBox="0 0 14 9"><path d="M1.5 1.5 L7 7 L12.5 1.5" fill="none" stroke="#4b5363" stroke-width="2"/></svg>
<div class="t d" style="left:99.50px;top:1388.22px;font-size:30px;line-height:42px;color:#abb2bf;font-family:'Liberation Mono', monospace;letter-spacing:-1.12px;">        enable-electron-logging)</div>
<div class="t d" style="left:0.00px;top:1430.22px;font-size:30px;line-height:42px;color:#4b5363;font-family:'Liberation Mono', monospace;width:60.5px;text-align:right;letter-spacing:-1.4px;">35</div>
<div class="t d" style="left:99.50px;top:1430.22px;font-size:30px;line-height:42px;color:#abb2bf;font-family:'Liberation Mono', monospace;letter-spacing:-1.12px;">          <span style="color:#c678dd">export</span> ELECTRON_ENABLE_LOGGING=1</div>
<div class="t d" style="left:0.00px;top:1472.22px;font-size:30px;line-height:42px;color:#4b5363;font-family:'Liberation Mono', monospace;width:60.5px;text-align:right;letter-spacing:-1.4px;">36</div>
<div class="t d" style="left:99.50px;top:1472.22px;font-size:30px;line-height:42px;color:#abb2bf;font-family:'Liberation Mono', monospace;letter-spacing:-1.12px;">          ;;</div>
<div class="t d" style="left:0.00px;top:1514.22px;font-size:30px;line-height:42px;color:#4b5363;font-family:'Liberation Mono', monospace;width:60.5px;text-align:right;letter-spacing:-1.4px;">37</div>
<div class="t d" style="left:99.50px;top:1514.22px;font-size:30px;line-height:42px;color:#abb2bf;font-family:'Liberation Mono', monospace;letter-spacing:-1.12px;">      <span style="color:#c678dd">esac</span></div>
<div class="t d" style="left:0.00px;top:1556.22px;font-size:30px;line-height:42px;color:#4b5363;font-family:'Liberation Mono', monospace;width:60.5px;text-align:right;letter-spacing:-1.4px;">38</div>
<div class="t d" style="left:99.50px;top:1556.22px;font-size:30px;line-height:42px;color:#abb2bf;font-family:'Liberation Mono', monospace;letter-spacing:-1.12px;"></div>
</div>
<div class="b" style="left:948px;top:1641px;width:614px;height:9px;border-radius:5px;background:#3a3f4b"></div>
<div class="b" style="left:555px;top:74px;width:281px;height:1582px;overflow:hidden">
<svg class="b" style="left:0;top:0" width="281" height="600" viewBox="0 0 281 600"><path d="M72.47 371.04 L70.95 370.19 L69.55 369.32 L68.26 368.43 L67.08 367.53 L66.02 366.61 L65.08 365.67 L64.27 364.73 L63.58 363.77 L63.02 362.82 L62.58 361.85 L62.28 360.89 L62.11 359.93 L62.06 358.97 L62.15 358.02 L62.37 357.08 L62.72 356.15 L63.20 355.23 L63.81 354.33 L64.54 353.45 L65.40 352.58 L66.38 351.74 L67.48 350.93 L68.70 350.14 L70.03 349.38 L71.48 348.65 L73.03 347.95 L74.68 347.29 L76.43 346.66 L78.28 346.07 L80.22 345.52 L82.24 345.01 L84.35 344.54 L86.53 344.11 L88.77 343.73 L91.08 343.39 L93.45 343.10 L95.87 342.85 L98.34 342.65 L100.85 342.50 L103.39 342.40 L105.95 342.34 L108.54 342.33 L111.14 342.38 L113.75 342.47 L116.35 342.60 L118.96 342.79 L121.54 343.02 L124.12 343.30 L126.66 343.63 L129.17 344.00 L131.65 344.41 L134.08 344.87 L136.46 345.37 L138.78 345.91 L141.04 346.49 L143.23 347.10 L145.35 347.76 L147.39 348.45 L149.35 349.17 L151.21 349.92 L152.98 350.70 L154.66 351.51 L156.23 352.34 L157.69 353.20 L159.05 354.08 L160.29 354.97 L161.41 355.89 L162.42 356.81 L163.30 357.75 L164.06 358.70 L164.69 359.66 L165.20 360.62 L165.57 361.58 L165.82 362.54 L165.93 363.50 L165.91 364.46 L165.76 365.40 L165.49 366.34 L165.08 367.27 L164.54 368.18 L163.88 369.07 L163.09 369.94 L162.17 370.80 L161.14 371.63 L159.98 372.43 L158.71 373.21 L157.33 373.96 L155.84 374.67 L154.24 375.35 L152.54 376.00" fill="none" stroke="#d7dae0" stroke-width="4.2" stroke-linecap="round"/><path d="M131.25 353.49 L132.62 356.24 L133.93 359.00 L135.16 361.78 L136.32 364.55 L137.40 367.32 L138.39 370.06 L139.29 372.77 L140.10 375.44 L140.82 378.06 L141.44 380.62 L141.96 383.11 L142.37 385.52 L142.69 387.85 L142.90 390.07 L143.00 392.20 L143.00 394.21 L142.89 396.10 L142.68 397.87 L142.37 399.51 L141.95 401.01 L141.43 402.36 L140.81 403.57 L140.09 404.62 L139.28 405.51 L138.37 406.25 L137.38 406.82 L136.30 407.23 L135.14 407.47 L133.90 407.55 L132.59 407.45 L131.22 407.19 L129.78 406.77 L128.28 406.18 L126.74 405.42 L125.14 404.51 L123.51 403.44 L121.84 402.22 L120.14 400.85 L118.42 399.34 L116.68 397.68 L114.94 395.90 L113.19 394.00 L111.44 391.97 L109.70 389.83 L107.98 387.59 L106.28 385.26 L104.61 382.84 L102.97 380.34 L101.37 377.78 L99.82 375.15 L98.32 372.47 L96.88 369.76 L95.50 367.01 L94.19 364.25 L92.94 361.47 L91.78 358.70 L90.69 355.93 L89.70 353.19 L88.78 350.47 L87.97 347.80 L87.24 345.17 L86.61 342.61 L86.09 340.11 L85.66 337.69 L85.34 335.36 L85.12 333.12 L85.00 330.99 L85.00 328.97 L85.09 327.06 L85.29 325.28 L85.60 323.63 L86.01 322.12 L86.52 320.76 L87.13 319.54 L87.84 318.47 L88.65 317.56 L89.54 316.81 L90.53 316.22 L91.60 315.80 L92.75 315.54 L93.98 315.45 L95.28 315.53 L96.65 315.78 L98.09 316.19 L99.58 316.76 L101.12 317.50 L102.71 318.40 L104.35 319.46 L106.01 320.67 L107.71 322.02" fill="none" stroke="#d7dae0" stroke-width="4.2" stroke-linecap="round"/><path d="M104.97 398.27 L103.29 399.46 L101.64 400.55 L100.03 401.54 L98.45 402.42 L96.91 403.20 L95.42 403.87 L93.97 404.43 L92.58 404.88 L91.24 405.21 L89.96 405.43 L88.75 405.54 L87.59 405.53 L86.51 405.41 L85.50 405.18 L84.57 404.83 L83.71 404.37 L82.93 403.79 L82.23 403.11 L81.61 402.32 L81.07 401.42 L80.63 400.42 L80.27 399.31 L79.99 398.11 L79.81 396.82 L79.71 395.43 L79.71 393.95 L79.79 392.39 L79.96 390.75 L80.22 389.03 L80.57 387.24 L81.00 385.39 L81.52 383.47 L82.13 381.49 L82.82 379.46 L83.59 377.39 L84.43 375.28 L85.36 373.12 L86.36 370.94 L87.43 368.74 L88.57 366.51 L89.78 364.28 L91.05 362.03 L92.38 359.78 L93.76 357.54 L95.20 355.31 L96.69 353.09 L98.22 350.90 L99.79 348.74 L101.40 346.60 L103.05 344.51 L104.72 342.46 L106.41 340.46 L108.13 338.51 L109.86 336.63 L111.60 334.81 L113.35 333.05 L115.10 331.38 L116.84 329.78 L118.58 328.26 L120.31 326.83 L122.02 325.49 L123.71 324.24 L125.38 323.09 L127.01 322.04 L128.61 321.09 L130.18 320.25 L131.70 319.52 L133.17 318.89 L134.60 318.38 L135.97 317.97 L137.28 317.68 L138.54 317.51 L139.73 317.45 L140.85 317.50 L141.90 317.67 L142.88 317.95 L143.79 318.35 L144.62 318.85 L145.37 319.47 L146.03 320.20 L146.62 321.03 L147.12 321.97 L147.53 323.02 L147.85 324.16 L148.09 325.40 L148.24 326.73 L148.30 328.16 L148.27 329.67 L148.15 331.26 L147.95 332.94" fill="none" stroke="#d7dae0" stroke-width="4.2" stroke-linecap="round"/><circle cx="114" cy="361.5" r="6.8" fill="#d7dae0"/><path d="M202 399 L236 330 L270 399 M213 374 L259 374" fill="none" stroke="#d7dae0" stroke-width="3.2"/></svg>
<div class="t d" style="left:74.00px;top:493.58px;font-size:39px;line-height:47px;color:#568af2;font-weight:bold;letter-spacing:-0.3px;-webkit-text-stroke:0;">A hackable text editor for</div>
<div class="t d" style="left:153.00px;top:547.98px;font-size:39px;line-height:47px;color:#568af2;font-weight:bold;letter-spacing:-0.7px;-webkit-text-stroke:0;">the 21<span style="font-size:24px;position:relative;top:-14px">st</span> Century</div>
<div class="t d" style="left:60.00px;top:690.35px;font-size:31px;line-height:37px;color:#9da5b4;letter-spacing:0.75px;">For help, please visit</div>
<div class="b" style="left:85px;top:776px;width:9px;height:9px;border-radius:50%;background:#9da5b4"></div>
<div class="t d" style="left:120.00px;top:761.75px;font-size:31px;line-height:37px;color:#9da5b4;letter-spacing:0.75px;">The <span style="color:#568af2">Atom docs</span></div>
<div class="b" style="left:85px;top:859.5px;width:9px;height:9px;border-radius:50%;background:#9da5b4"></div>
<div class="t d" style="left:120.00px;top:845.25px;font-size:31px;line-height:37px;color:#9da5b4;letter-spacing:0.75px;">The Atom forum at</div>
<div class="b" style="left:85px;top:944px;width:9px;height:9px;border-radius:50%;background:#9da5b4"></div>
<div class="t d" style="left:120.00px;top:929.75px;font-size:31px;line-height:37px;color:#9da5b4;letter-spacing:0.75px;">The <span style="color:#568af2">Atom org</span></div>
<div class="t d" style="left:120.00px;top:804.05px;font-size:31px;line-height:37px;color:#9da5b4;letter-spacing:0.75px;">and the API reference</div>
<div class="t d" style="left:120.00px;top:887.45px;font-size:31px;line-height:37px;color:#568af2;letter-spacing:0.75px;">discuss.atom.io</div>
<div class="t d" style="left:120.00px;top:972.05px;font-size:31px;line-height:37px;color:#9da5b4;letter-spacing:0.75px;">all GitHub-created Atom</div>
<div class="t d" style="left:120.00px;top:1013.05px;font-size:31px;line-height:37px;color:#9da5b4;letter-spacing:0.75px;">packages can be found.</div>
<div class="b" style="left:59px;top:1108px;width:32px;height:31px;border-radius:4px;background:#568af2"></div>
<svg class="b" style="left:59px;top:1108px" width="32" height="31" viewBox="0 0 32 31"><path d="M7.5 15.5 L13 21 L24.5 9.5" fill="none" stroke="#21252b" stroke-width="3.6"/></svg>
<div class="t d" style="left:106.00px;top:1104.15px;font-size:31px;line-height:37px;color:#9da5b4;letter-spacing:0.75px;">Show Welcome Guide when</div>
<div class="t d" style="left:59.00px;top:1144.75px;font-size:31px;line-height:37px;color:#9da5b4;letter-spacing:0.75px;">opening Atom</div>
<div class="t d" style="left:207.00px;top:1226.45px;font-size:31px;line-height:37px;color:#568af2;letter-spacing:0.75px;">atom.io</div>
</div>
<div class="b" style="left:555px;top:1635px;width:281px;height:21px;background:#252930;"></div>
<div class="b" style="left:560px;top:1641px;width:120px;height:9px;border-radius:5px;background:#3a3f4b"></div>
<div class="b" style="left:1142px;top:366px;width:1130px;height:1243px;background:#ffffff;border-top-left-radius:7px;overflow:hidden;">
<div class="b" style="left:0px;top:0px;width:1130px;height:45px;background:#f6f6f6;"></div>
<div class="b" style="left:0px;top:45px;width:1130px;height:52px;background:#f3f3f3;"></div>
<div class="b" style="left:0px;top:96px;width:1130px;height:1.5px;background:#cbcbcb;"></div>
<div class="b" style="left:16px;top:10px;width:22px;height:22px;border-radius:50%;background:#dddddd;border:1px solid #cdcdcd"></div>
<div class="b" style="left:56px;top:10px;width:22px;height:22px;border-radius:50%;background:#dddddd;border:1px solid #cdcdcd"></div>
<div class="b" style="left:96px;top:10px;width:22px;height:22px;border-radius:50%;background:#dddddd;border:1px solid #cdcdcd"></div>
<div class="t" style="left:231.00px;top:6.09px;font-size:26px;line-height:31px;color:#a8a8a8;letter-spacing:0.7px;">Developer Tools - file:///Applications/Atom.app/Contents/Resources/app.asar/static/index.html</div>
<svg class="b" style="left:18px;top:56px" width="30" height="30" viewBox="0 0 30 30"><path d="M9 24 H3 V3 H24 V9" fill="none" stroke="#4a86e8" stroke-width="2.4"/><path d="M11 11 L27 16.5 L20.5 19 L26.5 25 L24 27.5 L18 21.5 L15.5 27.5 Z" fill="#4a86e8"/></svg>
<svg class="b" style="left:70px;top:53px" width="34" height="34" viewBox="0 0 34 34"><rect x="10" y="2" width="21" height="30" fill="none" stroke="#5a5a5a" stroke-width="2.6"/><rect x="2.5" y="15" width="12" height="17" fill="#f4f4f4" stroke="#5a5a5a" stroke-width="2.6"/></svg>
<div class="b" style="left:124px;top:54px;width:2px;height:32px;background:#d0d0d0;"></div>
<div class="t" style="left:155.00px;top:53.88px;font-size:24px;line-height:29px;color:#474747;">Elements</div>
<div class="t" style="left:286.00px;top:53.88px;font-size:24px;line-height:29px;color:#474747;">Console</div>
<div class="t" style="left:408.00px;top:53.88px;font-size:24px;line-height:29px;color:#474747;">Sources</div>
<div class="t" style="left:530.00px;top:53.88px;font-size:24px;line-height:29px;color:#474747;">Network</div>
<div class="t" style="left:654.00px;top:53.88px;font-size:24px;line-height:29px;color:#474747;">Timeline</div>
<div class="t" style="left:777.00px;top:53.88px;font-size:24px;line-height:29px;color:#474747;">Profiles</div>
<div class="t" style="left:888.00px;top:53.88px;font-size:24px;line-height:29px;color:#474747;">Application</div>
<div class="t" style="left:1042.00px;top:53.88px;font-size:24px;line-height:29px;color:#474747;">Security</div>
<div class="b" style="left:138px;top:93.5px;width:132px;height:4px;background:#4d8af0;"></div>
<div class="b" style="left:921px;top:97px;width:30px;height:1110px;background:#f7f7f7;"></div>
<div class="b" style="left:920px;top:97px;width:1px;height:1110px;background:#e6e6e6;"></div>
<div class="b" style="left:950px;top:97px;width:2px;height:1146px;background:#cdcdcd;"></div>
<div class="b" style="left:928px;top:543px;width:16px;height:281px;border-radius:8px;background:#c3c3c3"></div>
<div class="b" style="left:6px;top:626px;width:905px;height:51px;border-radius:10px;background:#ebf1fb"></div>
<div class="b" style="left:86.5px;top:97px;width:1.8px;height:1110px;background:#a9c5f5;"></div>
<div class="b" style="left:0;top:97px;width:921px;height:1110px;overflow:hidden">
<svg class="b" style="left:368px;top:-7.0px" width="14" height="16" viewBox="0 0 14 16"><path d="M1 0 L13 8 L1 16 Z" fill="#6e6e6e"/></svg>
<div class="t" style="left:386.00px;top:-8.88px;font-size:22.1px;line-height:26px;color:#222;font-family:'Liberation Mono', monospace;"><span style="color:#a894a6">&lt;</span><span style="color:#881280">div</span><span style="color:#994500"> class</span><span style="color:#a894a6">="</span><span style="color:#1a1aa6">line</span><span style="color:#a894a6">"</span><span style="color:#994500"> data-screen-row</span><span style="color:#a894a6">="</span><span style="color:#1a1aa6">8</span><span style="color:#a894a6">"&gt;</span></div>
<div class="t" style="left:365.40px;top:17.42px;font-size:22.1px;line-height:26px;color:#222;font-family:'Liberation Mono', monospace;"><span style="color:#555555">…</span><span style="color:#a894a6">&lt;/</span><span style="color:#881280">div</span><span style="color:#a894a6">&gt;</span></div>
<svg class="b" style="left:368px;top:47.10000000000002px" width="14" height="16" viewBox="0 0 14 16"><path d="M1 0 L13 8 L1 16 Z" fill="#6e6e6e"/></svg>
<div class="t" style="left:386.00px;top:45.22px;font-size:22.1px;line-height:26px;color:#222;font-family:'Liberation Mono', monospace;"><span style="color:#a894a6">&lt;</span><span style="color:#881280">div</span><span style="color:#994500"> class</span><span style="color:#a894a6">="</span><span style="color:#1a1aa6">line</span><span style="color:#a894a6">"</span><span style="color:#994500"> data-screen-row</span><span style="color:#a894a6">="</span><span style="color:#1a1aa6">9</span><span style="color:#a894a6">"&gt;</span></div>
<div class="t" style="left:365.40px;top:71.52px;font-size:22.1px;line-height:26px;color:#222;font-family:'Liberation Mono', monospace;"><span style="color:#555555">…</span><span style="color:#a894a6">&lt;/</span><span style="color:#881280">div</span><span style="color:#a894a6">&gt;</span></div>
<svg class="b" style="left:368px;top:101.20000000000005px" width="14" height="16" viewBox="0 0 14 16"><path d="M1 0 L13 8 L1 16 Z" fill="#6e6e6e"/></svg>
<div class="t" style="left:386.00px;top:99.32px;font-size:22.1px;line-height:26px;color:#222;font-family:'Liberation Mono', monospace;"><span style="color:#a894a6">&lt;</span><span style="color:#881280">div</span><span style="color:#994500"> class</span><span style="color:#a894a6">="</span><span style="color:#1a1aa6">line</span><span style="color:#a894a6">"</span><span style="color:#994500"> data-screen-row</span><span style="color:#a894a6">="</span><span style="color:#1a1aa6">10</span><span style="color:#a894a6">"&gt;</span></div>
<div class="t" style="left:365.40px;top:125.62px;font-size:22.1px;line-height:26px;color:#222;font-family:'Liberation Mono', monospace;"><span style="color:#555555">…</span><span style="color:#a894a6">&lt;/</span><span style="color:#881280">div</span><span style="color:#a894a6">&gt;</span></div>
<svg class="b" style="left:368px;top:155.29999999999995px" width="14" height="16" viewBox="0 0 14 16"><path d="M1 0 L13 8 L1 16 Z" fill="#6e6e6e"/></svg>
<div class="t" style="left:386.00px;top:153.42px;font-size:22.1px;line-height:26px;color:#222;font-family:'Liberation Mono', monospace;"><span style="color:#a894a6">&lt;</span><span style="color:#881280">div</span><span style="color:#994500"> class</span><span style="color:#a894a6">="</span><span style="color:#1a1aa6">line</span><span style="color:#a894a6">"</span><span style="color:#994500"> data-screen-row</span><span style="color:#a894a6">="</span><span style="color:#1a1aa6">11</span><span style="color:#a894a6">"&gt;</span></div>
<div class="t" style="left:365.40px;top:179.72px;font-size:22.1px;line-height:26px;color:#222;font-family:'Liberation Mono', monospace;"><span style="color:#555555">…</span><span style="color:#a894a6">&lt;/</span><span style="color:#881280">div</span><span style="color:#a894a6">&gt;</span></div>
<div class="t" style="left:363.00px;top:207.52px;font-size:22.1px;line-height:26px;color:#222;font-family:'Liberation Mono', monospace;"><span style="color:#a894a6">&lt;/</span><span style="color:#881280">div</span><span style="color:#a894a6">&gt;</span></div>
<svg class="b" style="left:344px;top:238.60000000000002px" width="14" height="16" viewBox="0 0 14 16"><path d="M1 0 L13 8 L1 16 Z" fill="#6e6e6e"/></svg>
<div class="t" style="left:362.00px;top:236.72px;font-size:22.1px;line-height:26px;color:#222;font-family:'Liberation Mono', monospace;"><span style="color:#a894a6">&lt;</span><span style="color:#881280">div</span><span style="color:#994500"> style</span><span style="color:#a894a6">="</span><span style="color:#1a1aa6">contain: layout style;</span></div>
<div class="t" style="left:342.00px;top:263.02px;font-size:22.1px;line-height:26px;color:#222;font-family:'Liberation Mono', monospace;"><span style="color:#1a1aa6">position: absolute; height: 126px; width:</span></div>
<div class="t" style="left:342.00px;top:289.32px;font-size:22.1px;line-height:26px;color:#222;font-family:'Liberation Mono', monospace;"><span style="color:#1a1aa6">1449px; transform: translateY(252px);</span><span style="color:#a894a6">"&gt;</span></div>
<div class="t" style="left:342.00px;top:315.62px;font-size:22.1px;line-height:26px;color:#222;font-family:'Liberation Mono', monospace;"><span style="color:#555555">…</span><span style="color:#a894a6">&lt;/</span><span style="color:#881280">div</span><span style="color:#a894a6">&gt;</span></div>
<svg class="b" style="left:344px;top:344.5px" width="14" height="16" viewBox="0 0 14 16"><path d="M1 0 L13 8 L1 16 Z" fill="#6e6e6e"/></svg>
<div class="t" style="left:362.00px;top:342.62px;font-size:22.1px;line-height:26px;color:#222;font-family:'Liberation Mono', monospace;"><span style="color:#a894a6">&lt;</span><span style="color:#881280">div</span><span style="color:#994500"> style</span><span style="color:#a894a6">="</span><span style="color:#1a1aa6">contain: layout style;</span></div>
<div class="t" style="left:342.00px;top:368.92px;font-size:22.1px;line-height:26px;color:#222;font-family:'Liberation Mono', monospace;"><span style="color:#1a1aa6">position: absolute; height: 126px; width:</span></div>
<div class="t" style="left:342.00px;top:395.22px;font-size:22.1px;line-height:26px;color:#222;font-family:'Liberation Mono', monospace;"><span style="color:#1a1aa6">1449px; transform: translateY(378px);</span><span style="color:#a894a6">"&gt;</span></div>
<div class="t" style="left:342.00px;top:421.52px;font-size:22.1px;line-height:26px;color:#222;font-family:'Liberation Mono', monospace;"><span style="color:#555555">…</span><span style="color:#a894a6">&lt;/</span><span style="color:#881280">div</span><span style="color:#a894a6">&gt;</span></div>
<svg class="b" style="left:344px;top:450.70000000000005px" width="14" height="14" viewBox="0 0 14 14"><path d="M0 1 L14 1 L7 13 Z" fill="#6e6e6e"/></svg>
<div class="t" style="left:362.00px;top:447.82px;font-size:22.1px;line-height:26px;color:#222;font-family:'Liberation Mono', monospace;"><span style="color:#a894a6">&lt;</span><span style="color:#881280">div</span><span style="color:#994500"> style</span><span style="color:#a894a6">="</span><span style="color:#1a1aa6">contain: layout style;</span></div>
<div class="t" style="left:342.00px;top:474.12px;font-size:22.1px;line-height:26px;color:#222;font-family:'Liberation Mono', monospace;"><span style="color:#1a1aa6">position: absolute; height: 126px; width:</span></div>
<div class="t" style="left:342.00px;top:500.42px;font-size:22.1px;line-height:26px;color:#222;font-family:'Liberation Mono', monospace;"><span style="color:#1a1aa6">1449px; transform: translateY(504px);</span><span style="color:#a894a6">"&gt;</span></div>
<svg class="b" style="left:368px;top:530.9px" width="14" height="16" viewBox="0 0 14 16"><path d="M1 0 L13 8 L1 16 Z" fill="#6e6e6e"/></svg>
<div class="t" style="left:386.00px;top:529.02px;font-size:22.1px;line-height:26px;color:#222;font-family:'Liberation Mono', monospace;"><span style="color:#a894a6">&lt;</span><span style="color:#881280">div</span><span style="color:#994500"> class</span><span style="color:#a894a6">="</span><span style="color:#1a1aa6">line</span><span style="color:#a894a6">"</span><span style="color:#994500"> data-screen-row</span><span style="color:#a894a6">="</span><span style="color:#1a1aa6">24</span><span style="color:#a894a6">"&gt;</span></div>
<div class="t" style="left:365.40px;top:555.32px;font-size:22.1px;line-height:26px;color:#222;font-family:'Liberation Mono', monospace;"><span style="color:#555555">…</span><span style="color:#a894a6">&lt;/</span><span style="color:#881280">div</span><span style="color:#a894a6">&gt;</span></div>
<svg class="b" style="left:368px;top:585.0px" width="14" height="16" viewBox="0 0 14 16"><path d="M1 0 L13 8 L1 16 Z" fill="#6e6e6e"/></svg>
<div class="t" style="left:386.00px;top:583.12px;font-size:22.1px;line-height:26px;color:#222;font-family:'Liberation Mono', monospace;"><span style="color:#a894a6">&lt;</span><span style="color:#881280">div</span><span style="color:#994500"> class</span><span style="color:#a894a6">="</span><span style="color:#1a1aa6">line</span><span style="color:#a894a6">"</span><span style="color:#994500"> data-screen-row</span><span style="color:#a894a6">="</span><span style="color:#1a1aa6">25</span><span style="color:#a894a6">"&gt;</span></div>
<div class="t" style="left:365.40px;top:609.42px;font-size:22.1px;line-height:26px;color:#222;font-family:'Liberation Mono', monospace;"><span style="color:#555555">…</span><span style="color:#a894a6">&lt;/</span><span style="color:#881280">div</span><span style="color:#a894a6">&gt;</span></div>
<svg class="b" style="left:368px;top:638.3px" width="14" height="16" viewBox="0 0 14 16"><path d="M1 0 L13 8 L1 16 Z" fill="#6e6e6e"/></svg>
<div class="t" style="left:386.00px;top:636.42px;font-size:22.1px;line-height:26px;color:#222;font-family:'Liberation Mono', monospace;"><span style="color:#a894a6">&lt;</span><span style="color:#881280">div</span><span style="color:#994500"> class</span><span style="color:#a894a6">="</span><span style="color:#1a1aa6">line</span><span style="color:#a894a6">"</span><span style="color:#994500"> data-screen-row</span><span style="color:#a894a6">="</span><span style="color:#1a1aa6">26</span><span style="color:#a894a6">"&gt;</span></div>
<div class="t" style="left:365.40px;top:662.72px;font-size:22.1px;line-height:26px;color:#222;font-family:'Liberation Mono', monospace;"><span style="color:#555555">…</span><span style="color:#a894a6">&lt;/</span><span style="color:#881280">div</span><span style="color:#a894a6">&gt;</span></div>
<svg class="b" style="left:368px;top:692.5px" width="14" height="16" viewBox="0 0 14 16"><path d="M1 0 L13 8 L1 16 Z" fill="#6e6e6e"/></svg>
<div class="t" style="left:386.00px;top:690.62px;font-size:22.1px;line-height:26px;color:#222;font-family:'Liberation Mono', monospace;"><span style="color:#a894a6">&lt;</span><span style="color:#881280">div</span><span style="color:#994500"> class</span><span style="color:#a894a6">="</span><span style="color:#1a1aa6">line</span><span style="color:#a894a6">"</span><span style="color:#994500"> data-screen-row</span><span style="color:#a894a6">="</span><span style="color:#1a1aa6">27</span><span style="color:#a894a6">"&gt;</span></div>
<div class="t" style="left:365.40px;top:716.92px;font-size:22.1px;line-height:26px;color:#222;font-family:'Liberation Mono', monospace;"><span style="color:#555555">…</span><span style="color:#a894a6">&lt;/</span><span style="color:#881280">div</span><span style="color:#a894a6">&gt;</span></div>
<svg class="b" style="left:368px;top:746.5999999999999px" width="14" height="16" viewBox="0 0 14 16"><path d="M1 0 L13 8 L1 16 Z" fill="#6e6e6e"/></svg>
<div class="t" style="left:386.00px;top:744.72px;font-size:22.1px;line-height:26px;color:#222;font-family:'Liberation Mono', monospace;"><span style="color:#a894a6">&lt;</span><span style="color:#881280">div</span><span style="color:#994500"> class</span><span style="color:#a894a6">="</span><span style="color:#1a1aa6">line</span><span style="color:#a894a6">"</span><span style="color:#994500"> data-screen-row</span><span style="color:#a894a6">="</span><span style="color:#1a1aa6">28</span><span style="color:#a894a6">"&gt;</span></div>
<div class="t" style="left:365.40px;top:771.02px;font-size:22.1px;line-height:26px;color:#222;font-family:'Liberation Mono', monospace;"><span style="color:#555555">…</span><span style="color:#a894a6">&lt;/</span><span style="color:#881280">div</span><span style="color:#a894a6">&gt;</span></div>
<svg class="b" style="left:368px;top:800.7px" width="14" height="16" viewBox="0 0 14 16"><path d="M1 0 L13 8 L1 16 Z" fill="#6e6e6e"/></svg>
<div class="t" style="left:386.00px;top:798.82px;font-size:22.1px;line-height:26px;color:#222;font-family:'Liberation Mono', monospace;"><span style="color:#a894a6">&lt;</span><span style="color:#881280">div</span><span style="color:#994500"> class</span><span style="color:#a894a6">="</span><span style="color:#1a1aa6">line</span><span style="color:#a894a6">"</span><span style="color:#994500"> data-screen-row</span><span style="color:#a894a6">="</span><span style="color:#1a1aa6">29</span><span style="color:#a894a6">"&gt;</span></div>
<div class="t" style="left:365.40px;top:825.12px;font-size:22.1px;line-height:26px;color:#222;font-family:'Liberation Mono', monospace;"><span style="color:#555555">…</span><span style="color:#a894a6">&lt;/</span><span style="color:#881280">div</span><span style="color:#a894a6">&gt;</span></div>
<div class="t" style="left:363.00px;top:852.22px;font-size:22.1px;line-height:26px;color:#222;font-family:'Liberation Mono', monospace;"><span style="color:#a894a6">&lt;/</span><span style="color:#881280">div</span><span style="color:#a894a6">&gt;</span></div>
<svg class="b" style="left:344px;top:884.5px" width="14" height="16" viewBox="0 0 14 16"><path d="M1 0 L13 8 L1 16 Z" fill="#6e6e6e"/></svg>
<div class="t" style="left:362.00px;top:882.62px;font-size:22.1px;line-height:26px;color:#222;font-family:'Liberation Mono', monospace;"><span style="color:#a894a6">&lt;</span><span style="color:#881280">div</span><span style="color:#994500"> style</span><span style="color:#a894a6">="</span><span style="color:#1a1aa6">contain: layout style;</span></div>
<div class="t" style="left:342.00px;top:908.92px;font-size:22.1px;line-height:26px;color:#222;font-family:'Liberation Mono', monospace;"><span style="color:#1a1aa6">position: absolute; height: 126px; width:</span></div>
<div class="t" style="left:342.00px;top:935.22px;font-size:22.1px;line-height:26px;color:#222;font-family:'Liberation Mono', monospace;"><span style="color:#1a1aa6">1449px; transform: translateY(630px);</span><span style="color:#a894a6">"&gt;</span></div>
<div class="t" style="left:342.00px;top:961.52px;font-size:22.1px;line-height:26px;color:#222;font-family:'Liberation Mono', monospace;"><span style="color:#555555">…</span><span style="color:#a894a6">&lt;/</span><span style="color:#881280">div</span><span style="color:#a894a6">&gt;</span></div>
<svg class="b" style="left:344px;top:989.5px" width="14" height="16" viewBox="0 0 14 16"><path d="M1 0 L13 8 L1 16 Z" fill="#6e6e6e"/></svg>
<div class="t" style="left:362.00px;top:987.62px;font-size:22.1px;line-height:26px;color:#222;font-family:'Liberation Mono', monospace;"><span style="color:#a894a6">&lt;</span><span style="color:#881280">div</span><span style="color:#994500"> style</span><span style="color:#a894a6">="</span><span style="color:#1a1aa6">contain: layout style;</span></div>
<div class="t" style="left:342.00px;top:1013.92px;font-size:22.1px;line-height:26px;color:#222;font-family:'Liberation Mono', monospace;"><span style="color:#1a1aa6">position: absolute; height: 126px; width:</span></div>
<div class="t" style="left:342.00px;top:1040.22px;font-size:22.1px;line-height:26px;color:#222;font-family:'Liberation Mono', monospace;"><span style="color:#1a1aa6">1449px; transform: translateY(756px);</span><span style="color:#a894a6">"&gt;</span></div>
<div class="t" style="left:342.00px;top:1066.52px;font-size:22.1px;line-height:26px;color:#222;font-family:'Liberation Mono', monospace;"><span style="color:#555555">…</span><span style="color:#a894a6">&lt;/</span><span style="color:#881280">div</span><span style="color:#a894a6">&gt;</span></div>
<svg class="b" style="left:344px;top:1098px" width="14" height="16" viewBox="0 0 14 16"><path d="M1 0 L13 8 L1 16 Z" fill="#6e6e6e"/></svg>
<div class="t" style="left:362.00px;top:1096.12px;font-size:22.1px;line-height:26px;color:#222;font-family:'Liberation Mono', monospace;"><span style="color:#a894a6">&lt;</span><span style="color:#881280">div</span><span style="color:#994500"> style</span><span style="color:#a894a6">="</span><span style="color:#1a1aa6">contain: layout style;</span></div>
<div class="t" style="left:342.00px;top:1122.42px;font-size:22.1px;line-height:26px;color:#222;font-family:'Liberation Mono', monospace;"><span style="color:#1a1aa6">position: absolute; height: 126px; width:</span></div>
<div class="t" style="left:342.00px;top:1148.72px;font-size:22.1px;line-height:26px;color:#222;font-family:'Liberation Mono', monospace;"><span style="color:#1a1aa6">1449px; transform: translateY(882px);</span><span style="color:#a894a6">"&gt;</span></div>
<div class="t" style="left:342.00px;top:1175.02px;font-size:22.1px;line-height:26px;color:#222;font-family:'Liberation Mono', monospace;"><span style="color:#555555">…</span><span style="color:#a894a6">&lt;/</span><span style="color:#881280">div</span><span style="color:#a894a6">&gt;</span></div>
</div>
<div class="b" style="left:0px;top:1206px;width:951px;height:37px;background:#ffffff;"></div>
<div class="b" style="left:0px;top:1206px;width:951px;height:1.5px;background:#cdcdcd;"></div>
<div class="t" style="left:15.00px;top:1210.20px;font-size:22.5px;line-height:27px;color:#303942;">html</div>
<div class="t" style="left:85.00px;top:1210.20px;font-size:22.5px;line-height:27px;color:#303942;">body</div>
<div class="t" style="left:163.00px;top:1210.20px;font-size:22.5px;line-height:27px;color:#303942;">atom-workspace</div>
<div class="b" style="left:342px;top:1207.5px;width:343px;height:36px;background:#3879d9;"></div>
<div class="t" style="left:356.50px;top:1210.20px;font-size:22.5px;line-height:27px;color:#ffffff;">atom-workspace-axis.horizontal</div>
<div class="b" style="left:952px;top:97px;width:200px;height:54px;background:#f3f3f3;"></div>
<div class="b" style="left:952px;top:150px;width:200px;height:1.5px;background:#cdcdcd;"></div>
<div class="b" style="left:962px;top:101.5px;width:83px;height:50px;background:#ffffff;border:1px solid #cdcdcd;border-bottom:none"></div>
<div class="t" style="left:972.00px;top:111.18px;font-size:24px;line-height:29px;color:#333333;">Styles</div>
<div class="t" style="left:1058.00px;top:111.18px;font-size:24px;line-height:29px;color:#333333;">Computed</div>
<div class="t" style="left:962.00px;top:163.58px;font-size:24px;line-height:29px;color:#a0a0a0;">Filter</div>
<div class="b" style="left:952px;top:204px;width:200px;height:1.2px;background:#dcdcdc;"></div>
<div class="t" style="left:960.00px;top:210.02px;font-size:22.1px;line-height:27px;color:#8a8a8a;font-family:'Liberation Mono', monospace;">element.style {</div>
<div class="t" style="left:960.00px;top:238.62px;font-size:22.1px;line-height:27px;color:#222222;font-family:'Liberation Mono', monospace;">}</div>
<div class="b" style="left:952px;top:274px;width:200px;height:1.2px;background:#dcdcdc;"></div>
<div class="t" style="left:960.00px;top:280.62px;font-size:22.1px;line-height:27px;color:#222222;font-family:'Liberation Mono', monospace;">atom-workspace-axis.horizontal</div>
<div class="t" style="left:960.00px;top:306.92px;font-size:22.1px;line-height:27px;color:#222222;font-family:'Liberation Mono', monospace;">workspace-axis.horizontal {</div>
<div class="t" style="left:996.00px;top:336.22px;font-size:22.1px;line-height:27px;color:#c80000;font-family:'Liberation Mono', monospace;">display: flex;</div>
<div class="t" style="left:996.00px;top:363.62px;font-size:22.1px;line-height:27px;color:#c80000;font-family:'Liberation Mono', monospace;">flex:</div>
<div class="t" style="left:996.00px;top:390.92px;font-size:22.1px;line-height:27px;color:#c80000;font-family:'Liberation Mono', monospace;">min-width: 0;</div>
<div class="t" style="left:996.00px;top:418.32px;font-size:22.1px;line-height:27px;color:#c80000;font-family:'Liberation Mono', monospace;">min-height: 0;</div>
<div class="t" style="left:960.00px;top:443.62px;font-size:22.1px;line-height:27px;color:#222222;font-family:'Liberation Mono', monospace;">}</div>
<svg class="b" style="left:1061px;top:365px" width="13" height="15" viewBox="0 0 13 15"><path d="M0 0 L13 7.5 L0 15 Z" fill="#6e6e6e"/></svg>
<div class="t" style="left:1076.00px;top:363.62px;font-size:22.1px;line-height:27px;color:#222222;font-family:'Liberation Mono', monospace;">1;</div>
<div class="b" style="left:952px;top:482px;width:200px;height:1.2px;background:#dcdcdc;"></div>
<div class="t" style="left:960.00px;top:488.62px;font-size:22.1px;line-height:27px;color:#222222;font-family:'Liberation Mono', monospace;">atom-workspace-axis.horizontal</div>
<div class="t" style="left:960.00px;top:514.62px;font-size:22.1px;line-height:27px;color:#222222;font-family:'Liberation Mono', monospace;">workspace-axis.horizontal {</div>
<div class="t" style="left:996.00px;top:544.62px;font-size:22.1px;line-height:27px;color:#c80000;font-family:'Liberation Mono', monospace;">position: relative;</div>
<div class="t" style="left:960.00px;top:568.62px;font-size:22.1px;line-height:27px;color:#222222;font-family:'Liberation Mono', monospace;">}</div>
<div class="b" style="left:952px;top:605.5px;width:200px;height:1.2px;background:#dcdcdc;"></div>
<div class="t" style="left:960.00px;top:611.62px;font-size:22.1px;line-height:27px;color:#222222;font-family:'Liberation Mono', monospace;">* {</div>
<div class="t" style="left:996.00px;top:641.02px;font-size:22.1px;line-height:27px;color:#c80000;font-family:'Liberation Mono', monospace;">box-sizing: inherit;</div>
<div class="t" style="left:960.00px;top:666.42px;font-size:22.1px;line-height:27px;color:#222222;font-family:'Liberation Mono', monospace;">}</div>
<div class="b" style="left:952px;top:705px;width:200px;height:1.2px;background:#dcdcdc;"></div>
<div class="t" style="left:960.00px;top:710.12px;font-size:22.1px;line-height:27px;color:#222222;font-family:'Liberation Mono', monospace;"><span style="color:#222">*, </span><span style="color:#8d8d8d">*:before, *:after {</span></div>
<div class="t" style="left:996.00px;top:737.62px;font-size:22.1px;line-height:27px;color:#c80000;font-family:'Liberation Mono', monospace;">box-sizing: border-box;</div>
<div class="t" style="left:960.00px;top:765.62px;font-size:22.1px;line-height:27px;color:#222222;font-family:'Liberation Mono', monospace;">}</div>
<div class="b" style="left:995px;top:748px;width:130px;height:2px;background:#c04040;"></div>
<div class="b" style="left:952px;top:803px;width:200px;height:36px;background:#e8e8e8;"></div>
<div class="t" style="left:962.00px;top:803.18px;font-size:24px;line-height:29px;color:#303942;">Inherited from</div>
<div class="b" style="left:1115px;top:809px;width:12px;height:26px;background:#f6f6f6;border:1px solid #c8c8c8;"></div>
<div class="t" style="left:960.00px;top:842.22px;font-size:22.1px;line-height:27px;color:#222222;font-family:'Liberation Mono', monospace;">atom-workspace {</div>
<div class="t" style="left:996.00px;top:872.12px;font-size:22.1px;line-height:27px;color:#e29292;font-family:'Liberation Mono', monospace;">display: flex;</div>
<div class="t" style="left:996.00px;top:900.12px;font-size:22.1px;line-height:27px;color:#e29292;font-family:'Liberation Mono', monospace;">flex-direction: column;</div>
<div class="t" style="left:996.00px;top:928.22px;font-size:22.1px;line-height:27px;color:#e29292;font-family:'Liberation Mono', monospace;">height: 100%;</div>
<div class="t" style="left:996.00px;top:956.22px;font-size:22.1px;line-height:27px;color:#e29292;font-family:'Liberation Mono', monospace;">overflow: hidden;</div>
<div class="t" style="left:996.00px;top:984.22px;font-size:22.1px;line-height:27px;color:#e29292;font-family:'Liberation Mono', monospace;">position: relative;</div>
<div class="t" style="left:996.00px;top:1012.22px;font-size:22.1px;line-height:27px;color:#c80000;font-family:'Liberation Mono', monospace;">color:</div>
<div class="t" style="left:996.00px;top:1040.32px;font-size:22.1px;line-height:27px;color:#e29292;font-family:'Liberation Mono', monospace;">background-color: #282c34;</div>
<div class="t" style="left:996.00px;top:1068.32px;font-size:22.1px;line-height:27px;color:#c80000;font-family:'Liberation Mono', monospace;">font-family: -apple-system,</div>
<div class="t" style="left:1036.00px;top:1094.52px;font-size:22.1px;line-height:27px;color:#222222;font-family:'Liberation Mono', monospace;">Grande  Segoe UI</div>
<div class="t" style="left:1036.00px;top:1120.62px;font-size:22.1px;line-height:27px;color:#222222;font-family:'Liberation Mono', monospace;">sans-serif;</div>
<div class="t" style="left:960.00px;top:1146.62px;font-size:22.1px;line-height:27px;color:#222222;font-family:'Liberation Mono', monospace;">}</div>
<div class="b" style="left:1090px;top:1016px;width:18px;height:18px;background:#9da5b4;border:1px solid #888;"></div>
<div class="b" style="left:952px;top:1183px;width:200px;height:36px;background:#e8e8e8;"></div>
<div class="t" style="left:962.00px;top:1184.18px;font-size:24px;line-height:29px;color:#303942;">Inherited from</div>
<div class="b" style="left:1115px;top:1189px;width:12px;height:26px;background:#f6f6f6;border:1px solid #c8c8c8;"></div>
<div class="t" style="left:960.00px;top:1217.62px;font-size:22.1px;line-height:27px;color:#222222;font-family:'Liberation Mono', monospace;">html {</div>
</div>
</body></html>
